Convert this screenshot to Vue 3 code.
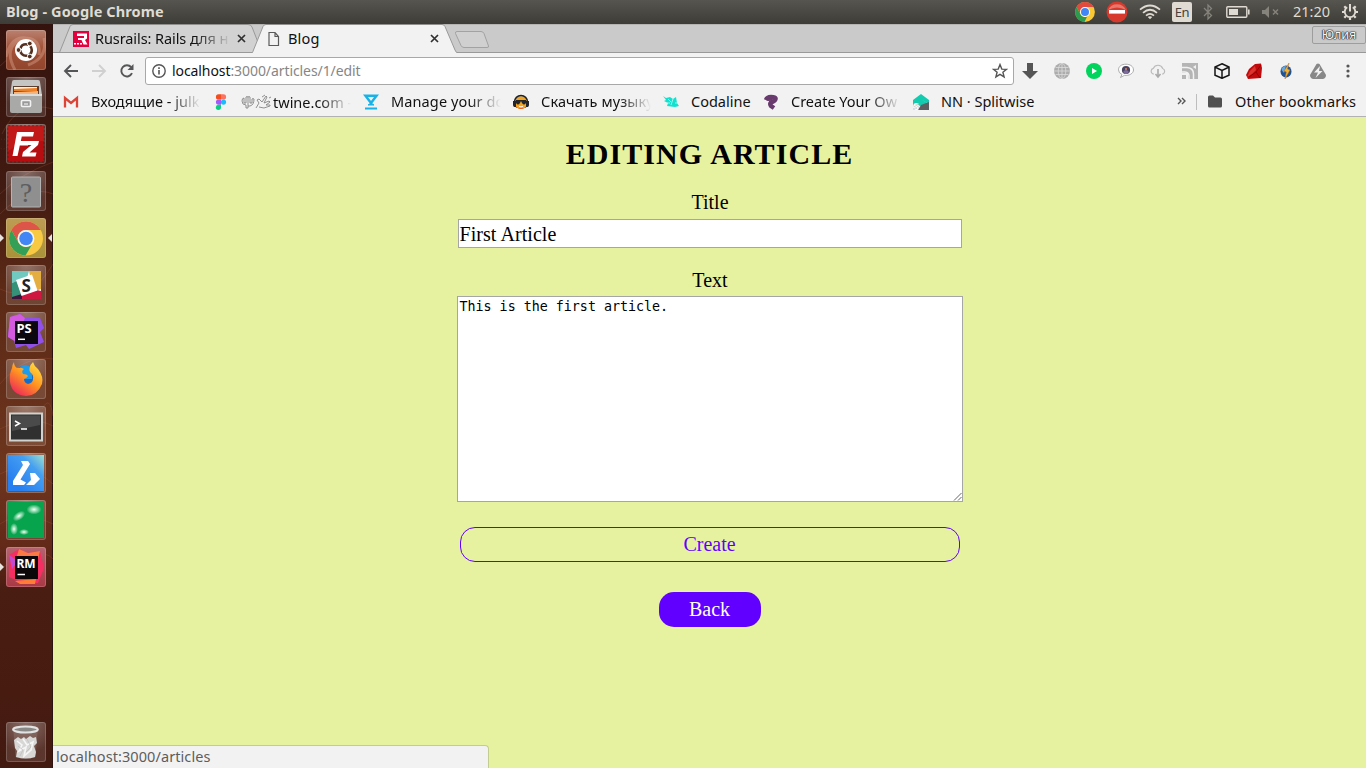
<script setup>
const bookmarks = [
  { icon: 'gmail', text: 'Входящие - julk', cls: 'fade b1' },
  { icon: 'figma', text: 'twine.com -', cls: 'fade b2', pre: true },
  { icon: 'manage', text: 'Manage your do', cls: 'fade b3' },
  { icon: 'emoji', text: 'Скачать музыку', cls: 'fade b4' },
  { icon: 'coda', text: 'Codaline', cls: 'short b5' },
  { icon: 'create', text: 'Create Your Ow', cls: 'fade b6' },
  { icon: 'split', text: 'NN · Splitwise', cls: 'b7' }
]
</script>

<template>
  <div class="desktop">
    <header class="panel">
      <span class="wtitle">Blog - Google Chrome</span>
      <div class="tray">
        <svg class="t-chrome" width="22" height="22" viewBox="0 0 40 40">
          <circle cx="20" cy="20" r="18" fill="#fbc934" />
          <path d="M4.4 11A18 18 0 0 1 35.6 11L20 11A9 9 0 0 0 12.2 24.5Z" fill="#e04a3f" />
          <path d="M4.4 11L12.2 24.5A9 9 0 0 0 24 28L19 38A18 18 0 0 1 4.4 11Z" fill="#2c9a50" />
          <circle cx="20" cy="20" r="9" fill="#fff" /><circle cx="20" cy="20" r="7.3" fill="#4285f4" />
        </svg>
        <svg class="t-stop" width="22" height="22" viewBox="0 0 22 22">
          <circle cx="11" cy="11" r="10.5" fill="#d8392d" /><path d="M2 9A10 10 0 0 1 20 9Q11 4 2 9Z" fill="#e8766b" />
          <rect x="3" y="9" width="16" height="3.6" fill="#fff" />
        </svg>
        <svg class="t-wifi" width="22" height="18" viewBox="0 0 22 18" fill="none" stroke="#dfdbd2" stroke-width="1.7">
          <path d="M1 6.7Q11-1.7 21 6.7M4 9.8Q11 3.7 18 9.8M7 12.7Q11 9.2 15 12.7" /><path d="M8.8 14Q11 12.5 13.2 14L11 16.2Z" fill="#dfdbd2" stroke="none" />
        </svg>
        <span class="lang">En</span>
        <svg class="t-bt" width="12" height="18" viewBox="0 0 12 18" fill="none" stroke="#85837b" stroke-width="1.3"><path d="M2 5L9.5 12.5L6 16V2L9.5 5.5L2 13" /></svg>
        <svg class="t-bat" width="24" height="14" viewBox="0 0 24 14"><rect x=".8" y="1.8" width="20" height="10.4" rx="1" fill="none" stroke="#dfdbd2" stroke-width="1.4" /><rect x="3" y="4" width="9" height="6" fill="#dfdbd2" /><path d="M22 4.5h1.6v5H22z" fill="#dfdbd2" /></svg>
        <svg class="t-vol" width="18" height="14" viewBox="0 0 18 14"><path d="M0 5h3l4-4v12L3 9H0z" fill="#85837b" /><path d="M11 4.5l5 5m0-5l-5 5" stroke="#85837b" stroke-width="1.5" /></svg>
        <span class="clock">21:20</span>
        <svg class="t-gear" width="18" height="18" viewBox="0 0 18 18" fill="none" stroke="#dfdbd2">
          <path d="M6.2 4.3A5.3 5.3 0 1 0 11.8 4.3" stroke-width="1.9" /><path d="M9 1v7.5" stroke-width="2" />
          <path d="M1 9h2.5M14.5 9H17M9 14.5V17M3.3 14.7L5 13M14.7 14.7L13 13M3.3 3.3L5 5M14.7 3.3L13 5" stroke-width="2.2" />
        </svg>
      </div>
    </header>

    <div class="body">
      <nav class="launcher">
        <svg class="swirl" width="53" height="744" viewBox="0 0 53 744" fill="none" stroke="#a85a3b" stroke-opacity=".28">
          <path d="M0 42L38 8M0 170Q20 150 53 138M2 110Q18 75 53 85M0 190Q30 160 53 170M0 265Q30 280 53 240M0 360Q25 330 53 335M0 405Q30 390 53 402M0 450Q26 436 53 460M0 500Q22 485 53 500M0 545Q40 520 53 535M42 385Q50 370 53 392" />
          <circle cx="3" cy="120" r="5" stroke-dasharray="1 2" />
        </svg>
        <div class="tile ubuntu">
          <svg width="40" height="40" viewBox="0 0 40 40"><path d="M0 27Q5 6 20 8Q35 9 33 25M9 40Q-3 18 15 9M38 8Q42 28 22 35" fill="none" stroke="#dfa994" stroke-opacity=".4" stroke-width="3" />
            <circle cx="20" cy="20" r="11" fill="#fff" /><circle cx="20" cy="20" r="5.8" fill="none" stroke="#55301f" stroke-width="2.6" stroke-dasharray="10.5 1.6" stroke-dashoffset="5" />
            <g fill="#55301f" stroke="#fff" stroke-width="1"><circle cx="12.5" cy="20" r="2.4" /><circle cx="23.8" cy="13.5" r="2.4" /><circle cx="23.8" cy="26.5" r="2.4" /></g></svg>
        </div>
        <div class="tile">
          <svg width="40" height="40" viewBox="0 0 40 40"><path d="M6 5Q6 3 8 3H32Q34 3 34 5L36 18H4Z" fill="#c5c5c3" /><path d="M7 9H33V18H7Z" fill="#5b3e30" /><path d="M8 10H31V12H8Z" fill="#fff1d7" /><path d="M8 12L31 11V14H8Z" fill="#ed8127" /><path d="M8 15L32 14V17H8Z" fill="#f7b37a" />
            <rect x="4" y="17" width="32" height="19" rx="2" fill="#a9aaa8" /><path d="M4 18H36" stroke="#ececea" stroke-width="1.5" /><rect x="15.5" y="23.5" width="9" height="6" rx="1" fill="#999" stroke="#f2f2f2" stroke-width="1.6" /><path d="M18 27H22" stroke="#fff" /></svg>
        </div>
        <div class="tile">
          <svg width="40" height="40" viewBox="0 0 40 40"><rect x="2" y="2" width="36" height="36" fill="#b60e10" /><rect x="2" y="2" width="36" height="36" fill="none" stroke="#6d1712" stroke-dasharray="2 2" /><path d="M2 2H38V17Q17 17 2 27Z" fill="#d02a25" opacity=".4" />
            <path d="M11 8H28L27 12.5H15.8L14.8 17H23L22 21.5H13.8L11.5 32H6.5ZM20 17H33L32 21L23.5 28.5H30.5L29.5 32.5H16L17 28L25.5 21H19Z" fill="#fff" /></svg>
        </div>
        <div class="tile">
          <svg width="40" height="40" viewBox="0 0 40 40"><rect x="5.5" y="6" width="29" height="30" rx="1" fill="#8f8f8f" stroke="#b3b3b3" /><text x="20" y="30.5" text-anchor="middle" font-family="Liberation Serif" font-size="28" fill="#5d5d5d">?</text></svg>
        </div>
        <div class="tile active"><i class="arr l"></i><i class="arr r"></i>
          <svg width="40" height="40" viewBox="0 0 40 40">
            <circle cx="20" cy="20.5" r="17" fill="#f8ca43" />
            <path d="M5.3 12A17 17 0 0 1 34.7 12H20A8.5 8.5 0 0 0 12.6 24.7Z" fill="#dc5548" />
            <path d="M5.3 12L12.6 24.7A8.5 8.5 0 0 0 26 26.5L19.5 37.5A17 17 0 0 1 5.3 12Z" fill="#34a057" />
            <circle cx="20" cy="20.5" r="8.4" fill="#f4f5f4" /><circle cx="20" cy="20.5" r="6.8" fill="#4285f4" />
          </svg>
        </div>
        <div class="tile">
          <svg width="40" height="40" viewBox="0 0 40 40"><path d="M6 6H35V34H6Z" fill="#fff" /><path d="M6 6H23L21 13L6 18Z" fill="#70c8bf" /><path d="M23 6H35V24L29 26L24 11Z" fill="#e5ae40" /><path d="M6 18L11 16L16 31L6 33Z" fill="#369179" /><path d="M15 34V30L31 25L35 26V34Z" fill="#cf183f" /><path d="M6 32L16 29V34H6Z" fill="#3d173e" />
            <path d="M10 15L26 9.5L31.5 25.5L15.5 31Z" fill="#fff" /><text x="20.3" y="26.5" text-anchor="middle" class="glyph" font-size="17" fill="#222">S</text></svg>
        </div>
        <div class="tile">
          <svg width="40" height="40" viewBox="0 0 40 40"><path d="M4 5L14 2L19 6L34 6L38 16L34 20L38 30L23 37L20 33L10 36L8 29L2 25Z" fill="#9151e8" /><path d="M4 5L14 2L19 6L9 29L2 25Z" fill="#d45bdf" /><rect x="9" y="9" width="23" height="23" fill="#0b080f" /><text x="10.5" y="20.7" class="glyph" font-size="13" fill="#fff">PS</text><path d="M12 27.3H19" stroke="#fff" stroke-width="1.5" /></svg>
        </div>
        <div class="tile">
          <svg width="40" height="40" viewBox="0 0 40 40"><defs><linearGradient id="fox" x1=".9" y1="0" x2=".2" y2="1"><stop stop-color="#ffe845" /><stop offset=".5" stop-color="#ff9420" /><stop offset="1" stop-color="#ed235d" /></linearGradient></defs>
            <circle cx="20" cy="20" r="13.5" fill="#176cc7" /><path d="M14 8Q20 3 26 9V20H15Z" fill="#1b9cec" />
            <path d="M8 3Q8 7 11 9Q15 8 18 10Q15 12 17 15Q21 15 22 17Q21 19 18 20Q18 24 22 25Q27 24 27 20Q28 16 24 13Q22 8 27 3Q28 7 32 10Q38 18 36 25Q31 37 20 37Q6 36 4 23Q3 15 6 9Q6 6 8 3Z" fill="url(#fox)" /></svg>
        </div>
        <div class="tile">
          <svg width="40" height="40" viewBox="0 0 40 40"><rect x="4" y="7.5" width="32" height="27" fill="#303030" stroke="#d2d2ce" stroke-width="2" /><path d="M6 9.5H34V19L6 25Z" fill="#4a4a4a" /><path d="M9 15L13.5 17.5L9 20M15 23H21" fill="none" stroke="#fff" stroke-width="1.5" /></svg>
        </div>
        <div class="tile">
          <svg width="40" height="40" viewBox="0 0 40 40"><defs><linearGradient id="brx" x1=".2" y1=".8" x2="1" y2="0"><stop stop-color="#287ff0" /><stop offset=".6" stop-color="#459ff0" /><stop offset="1" stop-color="#9ddfcf" /></linearGradient></defs><rect x="2" y="2" width="36" height="36" fill="url(#brx)" /><path d="M15 8H22L24 11L14.5 26.5L20 29.5L18 32H7V28L17 12ZM24 20H29L34 26L28 32H20L25 27Z" fill="#fff" /></svg>
        </div>
        <div class="tile">
          <svg width="40" height="40" viewBox="0 0 40 40"><defs><radialGradient id="glow"><stop stop-color="#fff" /><stop offset=".35" stop-color="#dfffe8" stop-opacity=".7" /><stop offset="1" stop-color="#fff" stop-opacity="0" /></radialGradient></defs><rect x="2" y="2" width="36" height="36" fill="#07a34d" /><g fill="url(#glow)"><ellipse cx="28" cy="9.5" rx="7.5" ry="5" /><ellipse cx="13" cy="16" rx="7" ry="4" transform="rotate(-35 13 16)" /><ellipse cx="8" cy="29" rx="4" ry="6" /><ellipse cx="18" cy="32" rx="5" ry="3" /></g></svg>
        </div>
        <div class="tile rm"><i class="arr l"></i>
          <svg width="40" height="40" viewBox="0 0 40 40"><path d="M13 2L22 6L34 4L38 21L32 36L19 37L3 30L3 8Z" fill="#f52f62" /><path d="M13 2L22 6L34 4L32 12H10Z" fill="#fa7945" /><path d="M3 8L12 14L6 22Z" fill="#c44ace" /><path d="M9 34L30 32L29 37H14Z" fill="#ff7b38" /><rect x="9" y="9" width="23" height="23" fill="#0c080a" /><text x="10.5" y="20.7" class="glyph" font-size="12" fill="#fff">RM</text><path d="M11.5 27.5H19" stroke="#fff" stroke-width="1.5" /></svg>
        </div>
        <div class="tile trash">
          <svg width="40" height="40" viewBox="0 0 40 40"><path d="M8 9H31L29 35Q20 38 10 35Z" fill="#baa6a1" opacity=".2" stroke="#c5b0a8" /><path d="M8 18L12 15L15 17L18 15L20 17L24 14L27 16L30 15L31 21L28 24L30 30L29 35Q20 38 10 35L11 29L9 26Z" fill="#d7d7d6" /><path d="M11 19L16 23L13 29L20 25L18 34L25 28L27 20L21 23L17 17" fill="none" stroke="#f6f6f6" stroke-width="1.6" /><path d="M12 24L17 28L14 34M21 17L25 25L20 30" fill="none" stroke="#bcbcbc" stroke-width=".7" /><ellipse cx="19.5" cy="7.5" rx="12.3" ry="3" fill="#8a8886" stroke="#e2e2e2" stroke-width="2.2" /></svg>
        </div>
      </nav>

      <main class="browser">
        <div class="tabs">
          <svg class="tabshape" width="1313" height="29" viewBox="53 24 1313 29">
            <path d="M59.5 52.5L70 26.5Q71 24.5 73 24.5H248Q251 24.5 252 27L262 52.5Z" fill="#d2d2d2" stroke="#999" />
            <path d="M53 52.5H1366" stroke="#999" />
            <path d="M251.5 53.5Q253 52 253.5 50L263 26.5Q264 24.5 266 24.5H442Q444 24.5 445 26.5L455 50Q456 52.5 458 53.5" fill="#f2f2f2" stroke="#999" />
            <path d="M457 31.5H481Q483 31.5 484 33.5L488.5 46Q489 47.5 487 47.5H464Q462 47.5 461 45.5L455.5 33.5Q455 31.5 457 31.5Z" fill="#d0d0d0" stroke="#a2a2a2" />
            <path d="M53 24.5H1366" stroke="#767571" stroke-opacity=".25" />
          </svg>
          <div class="tab one">
            <svg width="16" height="16" viewBox="0 0 16 16"><path d="M0 0H16V16H0Z" fill="#e2003f" /><path d="M4 2.5H14V7.5L12 9L14.5 13.5H10.5L8.5 9H5V7H11V5H4Z" fill="#fff" /><path d="M1 12h2v1.5H1zm3 0h2v1.5H4zm3 0h2v1.5H7z" fill="#fff" /></svg>
            <span class="t1">Rusrails: Rails для н</span>
            <svg class="x" width="9" height="9" viewBox="0 0 9 9"><path d="M1 1l7 7m0-7l-7 7" stroke="#303030" stroke-width="1.7" /></svg>
          </div>
          <div class="tab two">
            <svg width="16" height="16" viewBox="0 0 16 16"><path d="M3 1.5H9L12.5 5.5V14.5H3ZM9 1.5V5.5H12.5" fill="none" stroke="#5a5a5a" stroke-width="1.2" /></svg>
            <span class="t2">Blog</span>
            <svg class="x" width="9" height="9" viewBox="0 0 9 9"><path d="M1 1l7 7m0-7l-7 7" stroke="#303030" stroke-width="1.7" /></svg>
          </div>
          <span class="user">Юлия</span>
        </div>

        <div class="toolbar">
          <div class="nav">
            <svg width="16" height="16" viewBox="0 0 16 16"><path d="M15 8H2M8 2L2 8L8 14" fill="none" stroke="#555658" stroke-width="1.9" /></svg>
            <svg width="16" height="16" viewBox="0 0 16 16"><path d="M1 8H14M8 2L14 8L8 14" fill="none" stroke="#d0d0d0" stroke-width="1.9" /></svg>
            <svg width="16" height="16" viewBox="0 0 16 16"><path d="M13 10.2A5.6 5.6 0 1 1 12.2 4.2" fill="none" stroke="#555658" stroke-width="1.9" /><path d="M14.5 1V7H8.5Z" fill="#555658" /></svg>
          </div>
          <div class="omni">
            <svg width="14" height="14" viewBox="0 0 14 14"><circle cx="7" cy="7" r="6.2" fill="none" stroke="#555" stroke-width="1.4" /><path d="M6.2 6h1.6v4.5H6.2zM6.2 3.3h1.6v1.6H6.2z" fill="#555" /></svg>
            <span class="url"><b>localhost</b>:3000/articles/1/edit</span>
            <svg class="star" width="16" height="16" viewBox="0 0 16 16"><path d="M8 1.6L9.8 6.1L14.5 6.3L10.9 9.3L12.1 13.9L8 11.3L3.9 13.9L5.1 9.3L1.5 6.3L6.2 6.1Z" fill="none" stroke="#555" stroke-width="1.4" /></svg>
          </div>
          <div class="exts">
            <svg viewBox="0 0 16 16"><path d="M5 0h6v8h5l-8 8-8-8h5z" fill="#555" /></svg>
            <svg viewBox="0 0 16 16"><circle cx="8" cy="8" r="8" fill="#acacac" /><g fill="none" stroke="#dadada" stroke-width=".8"><ellipse cx="8" cy="8" rx="3.8" ry="7.6" /><path d="M8 0V16M0 8H16M1.5 4.5H14.5M1.5 11.5H14.5" /></g></svg>
            <svg viewBox="0 0 16 16"><circle cx="8" cy="8" r="8" fill="#00d45c" /><path d="M6 5L11 8L6 11Z" fill="#fff" /></svg>
            <svg viewBox="0 0 16 16"><path d="M8 1.2C3.5 1.2.5 3.4.5 6.8Q.5 10 4 11.5L2.5 14.5L6.5 12.3C11 13 15.5 10.5 15.5 7C15.5 3.3 12 1.2 8 1.2Z" fill="#fff" stroke="#999" stroke-width=".8" /><circle cx="8" cy="7" r="4.1" fill="#494260" /><path d="M5 9Q8 5 11 9L9 11H7Z" fill="#7e6c9c" /><path d="M7 5h2v2H7z" fill="#ba765c" /></svg>
            <svg viewBox="0 0 16 16"><path d="M4 11H3A3 3 0 0 1 3.4 5.3A5 5 0 0 1 12.7 5.5A3 3 0 0 1 13 11H12" fill="none" stroke="#bbb" stroke-width="1.2" /><path d="M8 6V13M5.5 11L8 14L10.5 11" fill="none" stroke="#aaa" stroke-width="1.6" /></svg>
            <svg viewBox="0 0 16 16"><path d="M0 0H16V16H0Z" fill="#b5b5b5" /><path d="M0 4.5H5Q11.5 5 11.5 11V16M0 9H3Q7 9.500 7 13V16" fill="none" stroke="#f2f2f2" stroke-width="1.5" /><path d="M0 10H6V16H0Z" fill="#f2f2f2" /><path d="M0 12H4V16H0Z" fill="#b5b5b5" /><path d="M11 4L14 2V6Z" fill="#f2f2f2" /></svg>
            <svg viewBox="0 0 16 16"><path d="M8 .8L15 4.1V12.2L8 15.3L1 12.2V4.1ZM1.3 4.3L8 7.4L14.7 4.3M8 7.4V15" fill="none" stroke="#161616" stroke-width="1.5" /></svg>
            <svg viewBox="0 0 16 16"><path d="M0 12L3 6L9 1L15 .5L16 5L15 15L2 16Z" fill="#c20a0d" /><path d="M1 14L4 8L9 3L10 7L6 11Z" fill="#dc3530" /><path d="M3 14L10 9L15 2M10 9L14 15" fill="none" stroke="#860000" stroke-width=".8" /></svg>
            <svg viewBox="0 0 16 16"><ellipse cx="8" cy="8.500" rx="5.5" ry="6" fill="#215291" /><path d="M3.500 7Q4 3 8 3L6 10Z" fill="#66a7df" /><path d="M11 0L6 8L8.300 9L7 16L12 7L9.500 6Z" fill="#efb430" stroke="#bd6b20" stroke-width=".5" /></svg>
            <svg viewBox="0 0 16 16"><path d="M6.500 1Q8 0 9.500 1L16 12Q16 15 13 16H3Q0 15 0 12Z" fill="#888" /><path d="M10 3L4 9.500H8L5.500 15L12.500 8H9Z" fill="#f2f2f2" /></svg>
          </div>
          <svg class="menu" width="4" height="14" viewBox="0 0 4 14" fill="#555"><circle cx="2" cy="2" r="1.6" /><circle cx="2" cy="7" r="1.6" /><circle cx="2" cy="12" r="1.6" /></svg>
        </div>

        <div class="marks">
          <div v-for="b in bookmarks" :key="b.icon" class="mark">
            <svg width="16" height="16" viewBox="0 0 16 16">
              <g v-if="b.icon === 'gmail'"><path d="M1 2.500H15V13.500H1Z" fill="#f3f3f3" /><path d="M2 13.500V4L8 9L14 4V13.500" fill="none" stroke="#db4437" stroke-width="2.3" /></g>
              <g v-else-if="b.icon === 'figma'"><path d="M8 .3H5.500A2.600 2.600 0 0 0 5.500 5.500H8Z" fill="#f24e1e" /><path d="M8 .3H10.500A2.600 2.600 0 0 1 10.500 5.500H8Z" fill="#ff7262" /><path d="M8 5.500H5.500A2.600 2.600 0 0 0 5.500 10.700H8Z" fill="#a259ff" /><circle cx="10.500" cy="8.100" r="2.600" fill="#1abcfe" /><path d="M8 10.700H5.500A2.600 2.600 0 1 0 8 13.300Z" fill="#0acf83" /></g>
              <g v-else-if="b.icon === 'manage'" fill="none" stroke="#18b2e8"><path d="M2.500 1.800H13.500L8 9Z" stroke-width="2.5" /><path d="M5 11L8 9L11 11Z" fill="#18b2e8" stroke-width="1" /><path d="M2 14.500H14" stroke-width="2" /></g>
              <g v-else-if="b.icon === 'emoji'"><circle cx="8" cy="8.700" r="6.400" fill="#f3a51e" /><path d="M2 11Q8 19 14 11L13 14H3Z" fill="#ea5c22" /><path d="M1.500 8A6.500 6.500 0 0 1 14.500 8" fill="none" stroke="#1e2026" stroke-width="1.500" /><path d="M0 7h3v6H1Q0 12 0 11zM13 7h3v4q0 1-1 2h-2zM3 6h10v3q-2 3-4 0L8 7 7 9q-2 3-4 0z" fill="#22252b" /><path d="M6 12.200Q8 13.700 10 12.200" stroke="#fff" fill="none" /></g>
              <g v-else-if="b.icon === 'coda'"><path d="M0 2L3 4L7 3L10 5L13 3L14 9L16 12L12 13L4 12L5 9L1 7L3 6Z" fill="#12e1cf" /><path d="M5 5L8 8M10 5L8 11M12 9H14M4 9H7" stroke="#b7fff6" fill="none" stroke-width=".8" /></g>
              <g v-else-if="b.icon === 'create'" fill="none" stroke="#693a6d"><path d="M3 6Q4 3 8 3Q13 3 12.500 5Q12 7 9 8Q6 9 8 12L11 14" stroke-width="4.500" /><path d="M3 5Q6 7 9 5" stroke-width="2" /></g>
              <g v-else><path d="M0 6L8 0L16 6V10L9 6L0 11Z" fill="#13cbae" /><path d="M1 8L8 5L16 10L7 12Z" fill="#13cbae" /><path d="M8 11L16 8V16H5Z" fill="#5d6061" /><text x="0" y="15.500" class="glyph" font-size="12" fill="#fff" stroke="#888" stroke-width=".2">s</text></g>
            </svg>
            <span class="mtext" :class="b.cls"><svg v-if="b.pre" class="hands" width="32" height="16" viewBox="0 0 32 16" fill="none" stroke="#858585" stroke-width=".9"><path d="M3 4Q1 4 1 7Q1 11 5 11V14H7V3Q6 2 5 3V9H3V4M7 12H9Q13 11 13 5Q12 4 11 5V9H9V3Q8 2 7 3M15 14L18 9L16 6L18 5L21 8L25 2L26 3L23 9L28 7L29 8L25 11L29 11V12L23 14L18 13M24 1L21 3M28 4L30 3" /></svg>{{ b.text }}</span>
          </div>
          <div class="others">
            <svg class="chev" width="9" height="8" viewBox="0 0 9 8"><path d="M1 1L4 4L1 7M5 1L8 4L5 7" fill="none" stroke="#555" stroke-width="1.400" /></svg>
            <i class="sep"></i>
            <svg class="folder" width="14" height="13" viewBox="0 0 14 13"><path d="M0 2Q0 .5 1.500.5H5L7 2.500H12.500Q14 2.500 14 4V11Q14 12.500 12.500 12.500H1.500Q0 12.500 0 11Z" fill="#505050" /></svg>
            <span class="ob">Other bookmarks</span>
          </div>
        </div>

        <section class="page">
          <h1>EDITING ARTICLE</h1>
          <label>Title</label>
          <div class="input">First Article</div>
          <label class="second">Text</label>
          <div class="area">This is the first article.
            <svg class="grip" width="9" height="9" viewBox="0 0 9 9"><path d="M1 8.500L8.500 1M5 8.500L8.500 5" stroke="#555" stroke-width=".9" /></svg>
          </div>
          <div class="create">Create</div>
          <div class="back">Back</div>
          <div class="status">localhost:3000/articles</div>
        </section>
      </main>
    </div>
  </div>
</template>

<style>
body { margin: 0; overflow: hidden; }
</style>

<style scoped>
* { box-sizing: border-box; }
.desktop { width: 1366px; height: 768px; display: flex; flex-direction: column; font-family: "Noto Sans", sans-serif; font-size: 14.5px; color: #111; overflow: hidden; white-space: nowrap; }
svg { display: block; flex: none; }
.glyph { font-family: "Noto Sans", sans-serif; font-weight: 700; }
.panel { height: 24px; flex: none; background: linear-gradient(#565550, #3d3c37); display: flex; align-items: center; justify-content: space-between; padding: 0 7px 0 6px; color: #dfdbd2; }
.wtitle { font-weight: 700; font-size: 14.5px; line-height: 22px; height: 24px; letter-spacing: .1px; }
.tray { display: flex; align-items: center; height: 24px; }
.t-stop { margin-left: 10px; }
.t-wifi { margin-left: 11px; }
.lang { width: 20px; height: 20px; border-radius: 2px; background: #dfdbd2; color: #44433e; margin-left: 11px; font-size: 13px; line-height: 21px; text-align: center; letter-spacing: -.4px; }
.t-bt { margin-left: 10px; }
.t-bat { margin-left: 12px; }
.t-vol { margin-left: 12px; }
.clock { width: 37px; margin: 0 11px 0 13px; font-size: 14.5px; line-height: 22px; height: 24px; }
.body { flex: 1; display: flex; min-height: 0; }
.launcher { width: 53px; flex: none; position: relative; display: flex; flex-direction: column; gap: 7px; padding: 6px 0 6px 6px; border-right: 1px solid #2a1510; background: linear-gradient(#34130e, #411a11 22%, #5b2916 35%, #6d351d 60%, #632a19 70%, #4a1d12 76%, #471b10 90%, #431a10); }
.swirl { position: absolute; left: 0; top: 0; }
.tile { width: 40px; height: 40px; flex: none; position: relative; border-radius: 3px; background: radial-gradient(circle at 50% 0, rgba(255,255,255,.36), rgba(255,255,255,.12) 70%); box-shadow: inset 0 0 0 1px rgba(255,255,255,.18); }
.ubuntu { background: linear-gradient(#b98270, #a35138 45%, #91462c); }
.active { background: linear-gradient(#bd9c54, #a99238); }
.rm { background: linear-gradient(#b56370, #a93944); }
.trash { margin-top: auto; }
.arr { position: absolute; top: 16px; border: 4px solid transparent; }
.arr.l { left: -6px; border-left-color: #e6e3df; border-right: 0; }
.arr.r { right: -6px; border-right-color: #e6e3df; border-left: 0; }
.browser { flex: 1; min-width: 0; display: flex; flex-direction: column; background: #f2f2f2; }
.tabs { height: 29px; position: relative; display: flex; background: #cacaca; }
.tabshape { position: absolute; left: 0; top: 0; }
.tab { position: relative; display: flex; align-items: center; height: 29px; }
.one { width: 193px; padding-left: 20px; }
.two { width: 194px; padding-left: 20px; }
.t1 { width: 136px; margin-left: 6px; padding-bottom: 2px; letter-spacing: -.08px; -webkit-mask-image: linear-gradient(to right, #000 100px, transparent 136px); }
.t2 { width: 134px; margin-left: 6px; padding-bottom: 2px; letter-spacing: .2px; }
.x { margin-left: 7px; }
.two .x { margin-left: 8px; }
.user { position: relative; margin-left: auto; margin-top: 2px; width: 54px; height: 18px; border: 1px solid #9d9d9d; border-radius: 2px; font-size: 12.5px; line-height: 16px; text-align: center; color: #f5f5f5; text-shadow: 0 0 1px #222, 0 0 1px #222, 0 0 1px #222, 0 0 2px #444; }
.toolbar { height: 36px; display: flex; align-items: center; padding-left: 10px; }
.nav { display: flex; gap: 12px; }
.omni { width: 869px; height: 28px; margin-left: 10px; border: 1px solid #a8a8a8; border-radius: 3px; background: #fff; display: flex; align-items: center; padding: 0 5px 0 6px; }
.url { margin-left: 6px; color: #868686; font-size: 14px; letter-spacing: -.08px; padding-bottom: 1px; }
.url b { font-weight: 400; color: #111; }
.star { margin-left: auto; }
.exts { display: flex; gap: 16px; margin-left: 8px; }
.exts svg { width: 16px; height: 16px; }
.menu { margin-left: 20px; }
.marks { height: 28px; border-bottom: 1px solid #b2b2b2; display: flex; align-items: center; padding: 0 10px 2px; }
.mark { display: flex; align-items: center; margin-right: 12px; }
.mtext { margin-left: 12px; line-height: 20px; height: 22px; }
.fade { width: 110px; -webkit-mask-image: linear-gradient(to right, #000 78px, transparent 110px); }
.b3 { letter-spacing: .12px; }
.b4 { letter-spacing: .1px; }
.short { width: 60px; }
.b2 { display: flex; align-items: center; }
.b2 svg { margin-top: 1px; }
.others { margin-left: auto; display: flex; align-items: center; }
.chev { margin-right: 1px; margin-top: -2px; }
.sep { width: 1px; height: 16px; background: #bdbdbd; margin: 0 11px 0 9px; }
.ob { width: 121px; margin-left: 13px; line-height: 20px; height: 22px; letter-spacing: .07px; }
.page { flex: 1; position: relative; background: #e7f2a1; display: flex; flex-direction: column; align-items: center; font-family: "Liberation Serif", serif; font-size: 20px; line-height: 24px; color: #000; }
h1 { font-size: 30px; line-height: 34px; letter-spacing: 1.08px; margin: 20px 0 0; }
label { margin-top: 19px; height: 24px; padding-left: 1px; }
.input { width: 504px; height: 29px; margin-top: 5px; border: 1px solid #a6a6a6; background: #fff; padding-left: 1px; line-height: 28px; letter-spacing: .06px; }
.second { margin-top: 20px; }
.area { position: relative; width: 506px; height: 206px; margin-top: 4px; border: 1px solid #a6a6a6; background: #fff; padding: 2px 1px 2px 2px; font: 13.333px/16px "DejaVu Sans Mono", monospace; }
.grip { position: absolute; right: 0; bottom: 0; }
.create { width: 500px; height: 35px; margin-top: 25px; border: 1px solid #6200ff; border-radius: 15px; color: #6200ff; text-align: center; line-height: 33px; }
.back { width: 102px; height: 35px; margin-top: 30px; border-radius: 15px; background: #6200ff; color: #fff; text-align: center; line-height: 35px; }
.status { position: absolute; left: 0; bottom: 0; width: 436px; height: 23px; background: #f2f2f2; border-top: 1px solid #c4cd91; border-right: 1px solid #c4cd91; border-radius: 0 4px 0 0; padding-left: 3px; font: 14.5px/21px "Noto Sans", sans-serif; letter-spacing: .08px; color: #5d5d5d; }
</style>
